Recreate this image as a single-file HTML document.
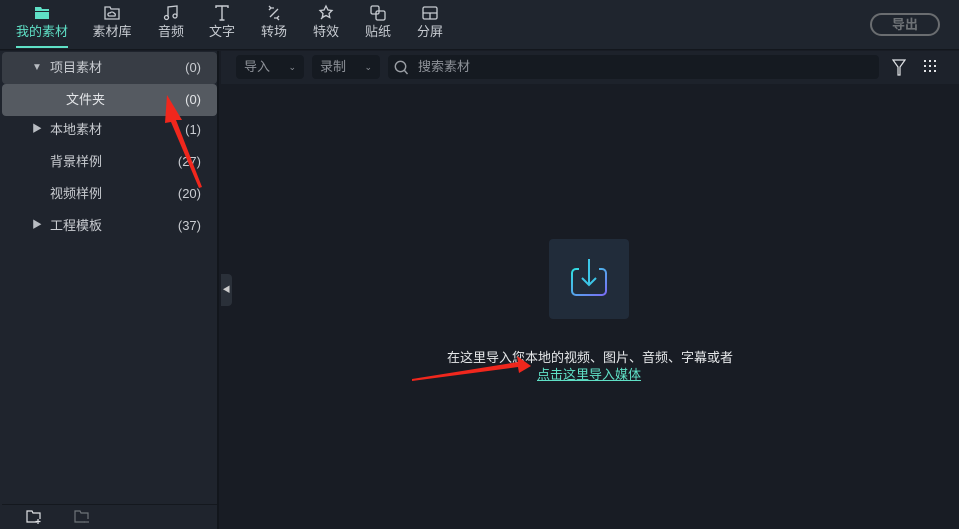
<!DOCTYPE html><html><head><meta charset="utf-8"><style>
*{margin:0;padding:0;box-sizing:border-box}
body{width:959px;height:529px;overflow:hidden;background:#181c24;font-family:"Liberation Sans","Noto Sans CJK SC",sans-serif;position:relative;color:#c8cbd0}
.top{position:absolute;left:0;top:0;width:959px;height:50px;background:#1f252e;border-bottom:1px solid #13171d}
.tab{position:absolute;top:0;height:50px;text-align:center;font-size:13px;color:#c8ccd2}
.tab svg{display:block;margin:4px auto 2px;width:18px;height:18px}
.tab span{display:block;line-height:16px}
.side{position:absolute;left:0;top:51px;width:219px;height:478px;background:#1f242d;border-right:2px solid #12161c}
.row{position:absolute;left:0;width:219px;height:32px;font-size:13px;line-height:32px;color:#c9ccd1}
.row .n{position:absolute;right:18px;top:0}
.tri{position:absolute;left:32px;top:0;font-size:10px;color:#b8bcc2}
.bar{position:absolute;left:221px;top:51px;width:738px;height:33px;background:#1d222b}
.dd{position:absolute;top:4px;height:24px;background:#151a21;border-radius:4px;font-size:13px;line-height:24px;color:#8d9198;padding-left:8px}
</style></head><body>
<div class="top">
 <div class="tab" style="left:14px;width:56px;color:#5fe0c6"><svg viewBox="0 0 18 18"><path d="M2 3h6l1 2h7v2H2z M2 8h14v7H2z" fill="#5fe0c6"/></svg><span>我的素材</span><div style="position:absolute;left:2px;top:46px;width:52px;height:2px;background:#5fe0c6"></div></div>
 <div class="tab" style="left:88px;width:48px"><svg viewBox="0 0 18 18" fill="none" stroke="#c8ccd2" stroke-width="1.3"><path d="M2 3h5l1 2h8v10H2z"/><path d="M6 12h6a2 2 0 0 0-1-3 2.5 2.5 0 0 0-4 0 1.5 1.5 0 0 0-1 3z"/></svg><span>素材库</span></div>
 <div class="tab" style="left:154px;width:34px"><svg viewBox="0 0 18 18" fill="none" stroke="#c8ccd2" stroke-width="1.3"><path d="M6 13V3l9-1v10"/><circle cx="4.5" cy="13.5" r="2"/><circle cx="13" cy="12" r="2"/></svg><span>音频</span></div>
 <div class="tab" style="left:205px;width:34px"><svg viewBox="0 0 18 18" fill="none" stroke="#c8ccd2" stroke-width="1.4"><path d="M3 4V2h12v2M9 2v14M6.5 16h5"/></svg><span>文字</span></div>
 <div class="tab" style="left:257px;width:34px"><svg viewBox="0 0 18 18" fill="none" stroke="#c8ccd2" stroke-width="1.3"><path d="M4 2l2 2-2 2M6 4H9 M13 5L5 13M14 12l-2 2 2 2M12 14H9"/></svg><span>转场</span></div>
 <div class="tab" style="left:309px;width:34px"><svg viewBox="0 0 18 18" fill="none" stroke="#c8ccd2" stroke-width="1.3"><path d="M9 2l2 4 4 .5-3 3 .8 4L9 11.5 5.2 13.5 6 9.5 3 6.5 7 6z"/><path d="M4 15l3-3"/></svg><span>特效</span></div>
 <div class="tab" style="left:361px;width:34px"><svg viewBox="0 0 18 18" fill="none" stroke="#c8ccd2" stroke-width="1.3"><rect x="2" y="2" width="8" height="8" rx="1.5"/><rect x="7" y="7" width="9" height="9" rx="1.5"/></svg><span>贴纸</span></div>
 <div class="tab" style="left:413px;width:34px"><svg viewBox="0 0 18 18" fill="none" stroke="#c8ccd2" stroke-width="1.3"><rect x="2" y="3" width="14" height="12" rx="1.5"/><path d="M2 9h14M9 9v6"/></svg><span>分屏</span></div>
 <div style="position:absolute;left:870px;top:13px;width:70px;height:23px;border:2px solid #6a6d70;border-radius:12px;text-align:center;font-size:13px;line-height:19px;color:#6e7276;font-weight:bold">导出</div>
</div>
<div class="side">
 <div class="row" style="top:1px;left:2px;width:215px;background:#383d45;border-radius:4px"><span class="tri" style="left:30px">▼</span><span style="position:absolute;left:48px">项目素材</span><span class="n" style="right:16px">(0)</span></div>
 <div class="row" style="top:33px;left:2px;width:215px;background:#555a61;border-radius:4px;color:#e3e5e8"><span style="position:absolute;left:64px">文件夹</span><span class="n" style="right:16px">(0)</span></div>
 <div class="row" style="top:63px"><span class="tri">▶</span><span style="position:absolute;left:50px">本地素材</span><span class="n">(1)</span></div>
 <div class="row" style="top:95px"><span style="position:absolute;left:50px">背景样例</span><span class="n">(27)</span></div>
 <div class="row" style="top:127px"><span style="position:absolute;left:50px">视频样例</span><span class="n">(20)</span></div>
 <div class="row" style="top:159px"><span class="tri">▶</span><span style="position:absolute;left:50px">工程模板</span><span class="n">(37)</span></div>
 <div style="position:absolute;left:2px;top:453px;width:215px;height:1px;background:#14181e"></div>
 <svg style="position:absolute;left:26px;top:459px" width="16" height="14" viewBox="0 0 16 14" fill="none" stroke="#e0e2e5" stroke-width="1.2"><path d="M11 12H1V1h5l1 2h7v6"/><path d="M12 9v5M9.5 11.5h5"/></svg>
 <svg style="position:absolute;left:74px;top:459px" width="16" height="14" viewBox="0 0 16 14" fill="none" stroke="#6e7379" stroke-width="1.2"><path d="M11 12H1V1h5l1 2h7v6"/><path d="M10 12h5"/></svg>
</div>
<div style="position:absolute;left:221px;top:274px;width:11px;height:32px;background:#2a3039;border-radius:0 4px 4px 0;font-size:8px;color:#ccc;line-height:32px;text-align:center">◀</div>
<div class="bar">
 <div class="dd" style="left:15px;width:68px">导入<span style="position:absolute;right:8px;font-size:9px">⌄</span></div>
 <div class="dd" style="left:91px;width:68px">录制<span style="position:absolute;right:8px;font-size:9px">⌄</span></div>
 <div class="dd" style="left:167px;width:491px;padding-left:30px">搜索素材<svg style="position:absolute;left:6px;top:5px" width="14" height="15" viewBox="0 0 14 15" fill="none" stroke="#9a9ea4" stroke-width="1.4"><circle cx="6.5" cy="6.5" r="5.2"/><path d="M10.5 10.5l3 3.5"/></svg></div>
 <svg style="position:absolute;left:671px;top:8px" width="14" height="17" viewBox="0 0 14 17" fill="none" stroke="#e0e2e5" stroke-width="1.2"><path d="M1 1h12L8 8v8H6V8z"/></svg>
 <svg style="position:absolute;left:703px;top:9px" width="14" height="14" fill="#e0e2e5"><rect x="0" y="0" width="2" height="2"/><rect x="5" y="0" width="2" height="2"/><rect x="10" y="0" width="2" height="2"/><rect x="0" y="5" width="2" height="2"/><rect x="5" y="5" width="2" height="2"/><rect x="10" y="5" width="2" height="2"/><rect x="0" y="10" width="2" height="2"/><rect x="5" y="10" width="2" height="2"/><rect x="10" y="10" width="2" height="2"/></svg>
</div>
<div style="position:absolute;left:549px;top:239px;width:80px;height:80px;background:#212c3a;border-radius:4px">
 <svg width="80" height="80" viewBox="0 0 80 80" fill="none" stroke-width="2"><defs><linearGradient id="g" x1="0" y1="0" x2="1" y2="1"><stop offset="0" stop-color="#2fe0e0"/><stop offset="1" stop-color="#7a6cf5"/></linearGradient></defs><path d="M30 30h-3a4 4 0 0 0-4 4v18a4 4 0 0 0 4 4h26a4 4 0 0 0 4-4V34a4 4 0 0 0-4-4h-3" stroke="url(#g)"/><path d="M40 20v26M33 39l7 7 7-7" stroke="#3cc6e8"/></svg>
</div>
<div style="position:absolute;left:400px;top:347px;width:380px;text-align:center;font-size:13px;color:#e6e8ea">在这里导入您本地的视频、图片、音频、字幕或者</div>
<div style="position:absolute;left:537px;top:364px;font-size:13px;color:#5fe0c6;text-decoration:underline">点击这里导入媒体</div>
<svg style="position:absolute;left:0;top:0" width="959" height="529"><polygon points="167,95 182,120 176,120 202,187 199,188 171,122 165,123" fill="#f0271d"/><polygon points="412,379 518,362 517,356 531,366 519,373 518,367 412,381" fill="#f0271d"/></svg>
</body></html>
